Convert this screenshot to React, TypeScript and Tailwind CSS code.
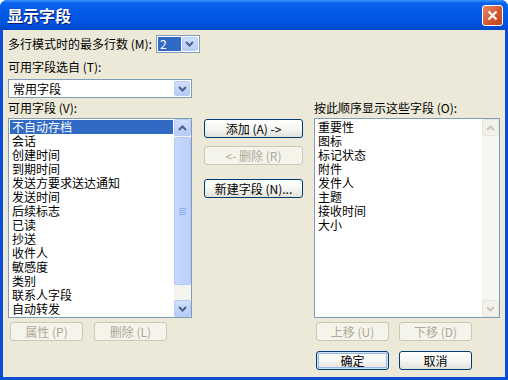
import React from 'react';

const leftItems = [
  '不自动存档',
  '会话',
  '创建时间',
  '到期时间',
  '发送方要求送达通知',
  '发送时间',
  '后续标志',
  '已读',
  '抄送',
  '收件人',
  '敏感度',
  '类别',
  '联系人字段',
  '自动转发',
];

const rightItems = ['重要性', '图标', '标记状态', '附件', '发件人', '主题', '接收时间', '大小'];

const Chevron = ({ up, disabled }: { up?: boolean; disabled?: boolean }) => (
  <svg width="9" height="6" viewBox="0 0 9 6">
    <path
      d={up ? 'M1 5 L4.5 1.5 L8 5' : 'M1 1 L4.5 4.5 L8 1'}
      fill="none"
      stroke={disabled ? '#c9c7ba' : '#4d6185'}
      strokeWidth="2"
    />
  </svg>
);

// little xp style arrow square, used by scrollbars and combos
const ArrowBox = ({ up, disabled, className = '' }: { up?: boolean; disabled?: boolean; className?: string }) => (
  <div
    className={`flex items-center justify-center rounded-[2px] border ${
      disabled
        ? 'border-[#e8e6dc] bg-[#f2f1ea]'
        : 'border-[#b7cbf7] bg-gradient-to-b from-[#d2defd] to-[#b7cbf9]'
    } ${className}`}
  >
    <Chevron up={up} disabled={disabled} />
  </div>
);

const Btn = ({
  children,
  disabled,
  isDefault,
  className = '',
}: {
  children: React.ReactNode;
  disabled?: boolean;
  isDefault?: boolean;
  className?: string;
}) => (
  <div
    className={`h-[19px] flex items-center justify-center rounded-[3px] border text-[12px] leading-[14px] ${
      disabled
        ? 'border-[#c9c7ba] bg-[#f5f4ea] text-[#aca899]'
        : 'border-[#003c74] bg-gradient-to-b from-white via-[#f6f6f2] to-[#e3e2da] text-black'
    } ${isDefault ? 'shadow-[inset_0_0_0_1px_#cee7ff,inset_0_0_0_2px_#98b8ea]' : ''} ${className}`}
  >
    {children}
  </div>
);

const ListBox = ({
  items,
  selected,
  active,
}: {
  items: string[];
  selected?: number;
  active?: boolean;
}) => (
  <div className="h-[200px] flex border border-[#7f9db9] bg-white">
    <div className="flex-1 p-[1px]">
      {items.map((it, i) => (
        <div
          key={it}
          className={`h-[14px] pl-[2px] text-[12px] leading-[14px] whitespace-nowrap ${
            i === selected ? 'bg-[#316ac5] text-white' : 'text-black'
          }`}
        >
          {it}
        </div>
      ))}
    </div>
    <div className={`w-[17px] flex flex-col ${active ? 'bg-[#f4f3ee]' : 'bg-[#f7f6f2]'}`}>
      <ArrowBox up disabled={!active} className="h-[17px]" />
      {active && (
        <div className="mt-[1px] h-[148px] mx-[0px] rounded-[2px] border border-[#b4c8f6] bg-gradient-to-r from-[#c9d8fc] to-[#bccffb] flex flex-col items-center justify-center gap-[1px]">
          <div className="w-[7px] h-[1px] bg-[#8cb0f8]" />
          <div className="w-[7px] h-[1px] bg-[#8cb0f8]" />
          <div className="w-[7px] h-[1px] bg-[#8cb0f8]" />
          <div className="w-[7px] h-[1px] bg-[#8cb0f8]" />
        </div>
      )}
      <div className="flex-1" />
      <ArrowBox disabled={!active} className="h-[17px]" />
    </div>
  </div>
);

export default function App() {
  return (
    <div className="w-[508px] h-[380px] bg-white font-['Noto_Sans_CJK_SC',sans-serif]">
      <div className="w-full h-full flex flex-col rounded-t-[7px] bg-[#0b4fd9]">
        {/* title bar */}
        <div className="h-[30px] flex items-center justify-between pl-[7px] pr-[5px] rounded-t-[7px] bg-[linear-gradient(to_bottom,#3d95ff_0%,#0a62ec_10%,#0058e6_45%,#0052e0_80%,#0046c8_100%)]">
          <span className="text-white font-bold text-[16px] leading-[20px] [text-shadow:1px_1px_0_#0a1874]">
            显示字段
          </span>
          <div className="w-[21px] h-[21px] flex items-center justify-center rounded-[3px] border border-white bg-gradient-to-br from-[#e88a66] via-[#d65b31] to-[#c0411b]">
            <svg width="11" height="11" viewBox="0 0 11 11">
              <path d="M1.5 1.5 L9.5 9.5 M9.5 1.5 L1.5 9.5" stroke="white" strokeWidth="2.2" />
            </svg>
          </div>
        </div>

        {/* client area */}
        <div className="flex-1 mx-[3px] mb-[3px] bg-[#ece9d8] pl-[5px] pt-[5px] text-[12px] leading-[14px] text-black">
          <div className="h-[18px] flex items-center">
            <span>多行模式时的最多行数 (M):</span>
            <div className="ml-[4px] w-[44px] h-[18px] flex border border-[#7f9db9] bg-white p-[1px]">
              <div className="flex-1 mr-[1px] bg-[#316ac5] text-white pl-[2px] leading-[14px]">2</div>
              <ArrowBox className="w-[16px]" />
            </div>
          </div>

          <div className="mt-[7px] h-[14px]">可用字段选自 (T):</div>

          <div className="mt-[5px] w-[184px] h-[19px] flex border border-[#7f9db9] bg-white p-[1px]">
            <div className="flex-1 pl-[3px] leading-[15px]">常用字段</div>
            <ArrowBox className="w-[16px]" />
          </div>

          <div className="mt-[3px] flex">
            {/* left column */}
            <div className="w-[184px]">
              <div className="h-[14px]">可用字段 (V):</div>
              <div className="mt-[3px]">
                <ListBox items={leftItems} selected={0} active />
              </div>
              <div className="mt-[4px] ml-[2px] flex gap-[11px]">
                <Btn disabled className="w-[73px]">属性 (P)</Btn>
                <Btn disabled className="w-[73px]">删除 (L)</Btn>
              </div>
            </div>

            {/* middle column */}
            <div className="ml-[12px] w-[99px] pt-[18px] flex flex-col">
              <Btn>添加 (A) -&gt;</Btn>
              <Btn disabled className="mt-[8px]">&lt;- 删除 (R)</Btn>
              <Btn className="mt-[14px]">新建字段 (N)...</Btn>
            </div>

            {/* right column */}
            <div className="ml-[11px] w-[186px]">
              <div className="h-[14px]">按此顺序显示这些字段 (O):</div>
              <div className="mt-[3px]">
                <ListBox items={rightItems} />
              </div>
              <div className="mt-[4px] ml-[2px] flex gap-[10px]">
                <Btn disabled className="w-[73px]">上移 (U)</Btn>
                <Btn disabled className="w-[73px]">下移 (D)</Btn>
              </div>
              <div className="mt-[10px] ml-[2px] flex gap-[10px]">
                <Btn isDefault className="w-[73px]">确定</Btn>
                <Btn className="w-[73px]">取消</Btn>
              </div>
            </div>
          </div>
        </div>
      </div>
    </div>
  );
}
